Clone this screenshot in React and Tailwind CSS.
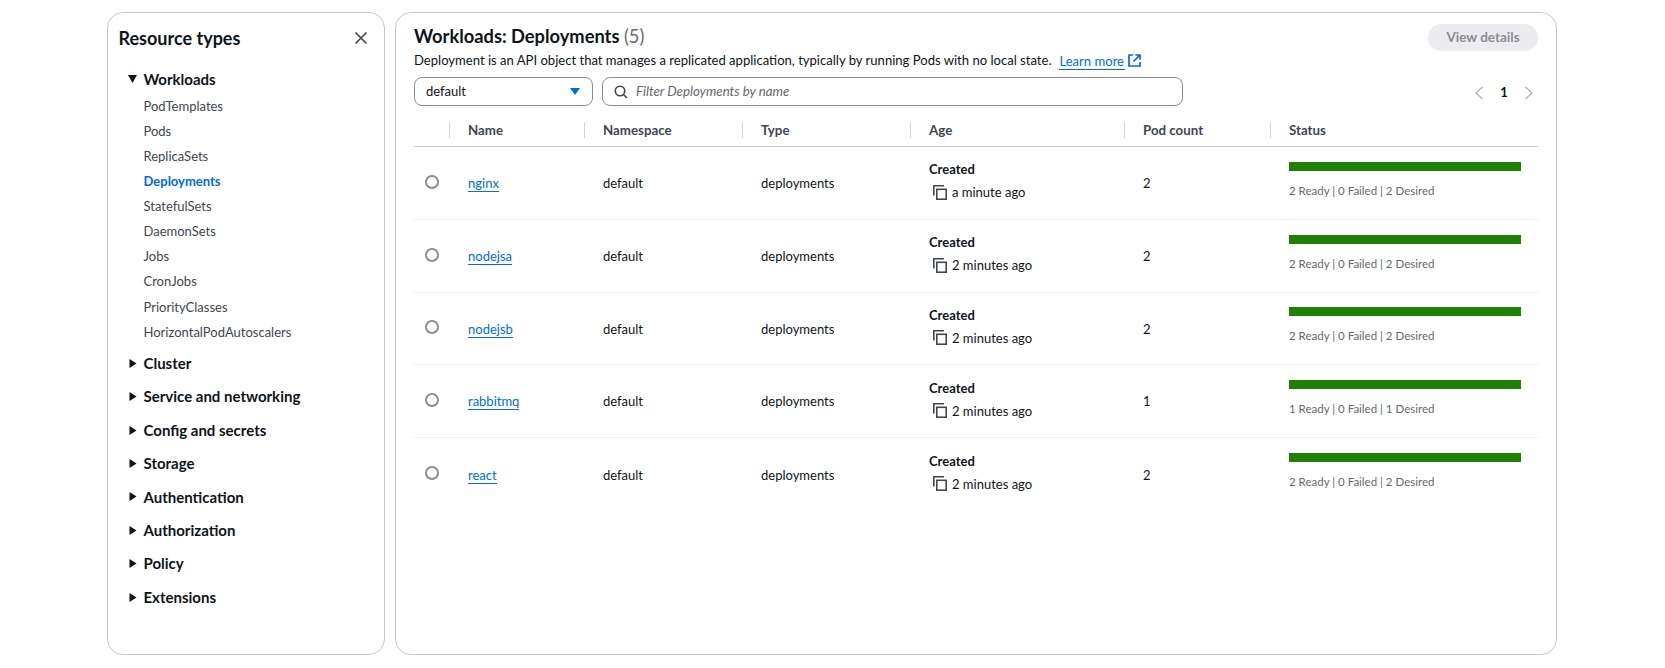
import React from 'react';

const items = ['PodTemplates','Pods','ReplicaSets','Deployments','StatefulSets','DaemonSets','Jobs','CronJobs','PriorityClasses','HorizontalPodAutoscalers'];
const groups = ['Cluster','Service and networking','Config and secrets','Storage','Authentication','Authorization','Policy','Extensions'];
const rows = [
  ['nginx','a minute ago','2','2 Ready | 0 Failed | 2 Desired'],
  ['nodejsa','2 minutes ago','2','2 Ready | 0 Failed | 2 Desired'],
  ['nodejsb','2 minutes ago','2','2 Ready | 0 Failed | 2 Desired'],
  ['rabbitmq','2 minutes ago','1','1 Ready | 0 Failed | 1 Desired'],
  ['react','2 minutes ago','2','2 Ready | 0 Failed | 2 Desired'],
];
const headers = ['Name','Namespace','Type','Age','Pod count','Status'];
const cols = 'grid grid-cols-[35px_135px_158px_168px_214px_146px_1fr]';

function Tri({ open }) {
  return open ? (
    <svg width="9" height="8" viewBox="0 0 9 8" className="shrink-0"><path d="M0 0h9L4.5 8z" fill="#0f141a" /></svg>
  ) : (
    <svg width="8" height="9" viewBox="0 0 8 9" className="shrink-0"><path d="M0.5 0l7 4.5-7 4.5z" fill="#0f141a" /></svg>
  );
}

function Copy() {
  return (
    <svg width="14" height="15" viewBox="0 0 14 15" fill="none" stroke="#424650" strokeWidth="1.6" className="shrink-0">
      <path d="M0.8 10.5V0.8H11" />
      <rect x="3.8" y="4.3" width="9.4" height="9.9" />
    </svg>
  );
}

function Sidebar() {
  return (
    <aside className="w-[278px] shrink-0 border border-[#c6c6cd] rounded-[16px] pl-[10.5px] pr-4 pt-[14px]">
      <div className="flex items-center justify-between h-[20px] mt-px">
        <h2 className="text-[18px] font-bold text-[#0f141a] leading-none">Resource types</h2>
        <svg width="14" height="14" viewBox="0 0 14 14" stroke="#424650" strokeWidth="1.7" fill="none"><path d="M1.5 1.5l11 11M12.5 1.5l-11 11" /></svg>
      </div>
      <div className="flex items-center h-[20px] mt-[21px] pl-[9px] gap-[7px]">
        <Tri open />
        <span className="text-[15px] font-bold text-[#0f141a]">Workloads</span>
      </div>
      <ul className="flex flex-col pl-[25px] mt-[5px]">
        {items.map((t) => (
          <li key={t} className={t === 'Deployments' ? 'h-[25.1px] flex items-center text-[13px] font-bold text-[#006ce0]' : 'h-[25.1px] flex items-center text-[13px] text-[#424650]'}>{t}</li>
        ))}
      </ul>
      <ul className="flex flex-col mt-[1.7px]">
        {groups.map((g) => (
          <li key={g} className="h-[33.4px] flex items-center pl-[10px] gap-[7px]">
            <Tri />
            <span className="text-[15px] font-bold text-[#0f141a]">{g}</span>
          </li>
        ))}
      </ul>
    </aside>
  );
}

function Main() {
  return (
    <main className="flex-1 border border-[#c6c6cd] rounded-[16px] pl-[18px] pr-[18px] pt-[11px]">
      <div className="flex items-center justify-between h-[27px]">
        <h1 className="text-[18.3px] font-bold text-[#0f141a] leading-none mt-[-2px]">
          Workloads: Deployments <span className="font-normal text-[#656871]">(5)</span>
        </h1>
        <button className="w-[110px] h-[27px] rounded-full bg-[#ebebf0] text-[13.5px] font-bold text-[#8c8c94]">View details</button>
      </div>
      <div className="flex items-center h-[20px] text-[13.07px] text-[#0f141a]">
        <span>Deployment is an API object that manages a replicated application, typically by running Pods with no local state.</span>
        <a className="ml-[8px] text-[#006ce0] border-b border-[#006ce0] leading-[16px] mt-[1px] pr-[1px]">Learn more</a>
        <svg width="13" height="13" viewBox="0 0 13 13" fill="none" stroke="#006ce0" strokeWidth="1.7" className="ml-[3px] mt-[-2px]">
          <path d="M5 1H1v11h11V8M7.5 1H12v4.5M12 1L5.5 7.5" />
        </svg>
      </div>
      <div className="flex items-center h-[29px] mt-[6px]">
        <div className="w-[179px] h-full border border-[#8c8c94] rounded-[8px] flex items-center justify-between pl-[11px] pr-[12px] text-[13px] text-[#0f141a]">
          <span>default</span>
          <svg width="10" height="7" viewBox="0 0 10 7"><path d="M0 0h10L5 7z" fill="#006ce0" /></svg>
        </div>
        <div className="w-[581px] h-full ml-[9px] border border-[#8c8c94] rounded-[8px] flex items-center pl-[11px] text-[13.25px] italic text-[#656871]">
          <svg width="14" height="14" viewBox="0 0 14 14" fill="none" stroke="#424650" strokeWidth="1.6" className="mr-[8px]">
            <circle cx="6" cy="6" r="4.7" /><path d="M9.5 9.5L13 13" />
          </svg>
          Filter Deployments by name
        </div>
        <div className="ml-auto flex items-center pr-[4px] pt-[2px]">
          <svg width="10" height="14" viewBox="0 0 10 14" fill="none" stroke="#b4b4bb" strokeWidth="1.4"><path d="M8.5 1L2 7l6.5 6" /></svg>
          <span className="w-[40px] text-center text-[13px] font-bold text-[#0f141a]">1</span>
          <svg width="10" height="14" viewBox="0 0 10 14" fill="none" stroke="#b4b4bb" strokeWidth="1.4"><path d="M1.5 1L8 7l-6.5 6" /></svg>
        </div>
      </div>
      <div className="mt-[8px]">
        <div className={`${cols} h-[32px] items-center border-b border-[#c6c6cd] box-content`}>
          <div />
          {headers.map((h) => (
            <div key={h} className="flex items-center h-[16px] border-l border-[#d1d1d6] pl-[18px] text-[13.3px] font-bold text-[#424650]"><span className="mt-[2px]">{h}</span></div>
          ))}
        </div>
        {rows.map(([name, age, count, status]) => (
          <div key={name} className={`${cols} h-[72.75px] items-center border-b border-[#ebebf0] last:border-b-0 text-[13px] text-[#0f141a]`}>
            <div className="flex pl-[11px] pb-[2px]">
              <span className="block w-[14px] h-[14px] rounded-full border-2 border-[#8c8c94]" />
            </div>
            <div className="pl-[19px] pt-[2px]">
              <a className="text-[#006ce0] border-b border-[#006ce0] leading-[16px] inline-block">{name}</a>
            </div>
            <div className="pl-[19px] pt-[2px]">default</div>
            <div className="pl-[19px] pt-[2px]">deployments</div>
            <div className="pl-[19px] flex flex-col gap-[5px] pb-[4px]">
              <span className="font-bold leading-[18px]">Created</span>
              <span className="flex items-center gap-[5px] pl-[4px] leading-[18px]"><Copy />{age}</span>
            </div>
            <div className="pl-[19px] pt-[2px]">{count}</div>
            <div className="pl-[19px] pr-[17px] flex flex-col gap-[12px] pb-[5px]">
              <div className="h-[9px] bg-[#1f8104]" />
              <span className="text-[11.5px] leading-[16px] text-[#656871]">{status}</span>
            </div>
          </div>
        ))}
      </div>
    </main>
  );
}

export default function App() {
  return (
    <div className="h-[668px] bg-white pt-[12px] pb-[13px] pl-[107px] pr-[108px] flex gap-[10px] font-['Lato',sans-serif]">
      <Sidebar />
      <Main />
    </div>
  );
}
